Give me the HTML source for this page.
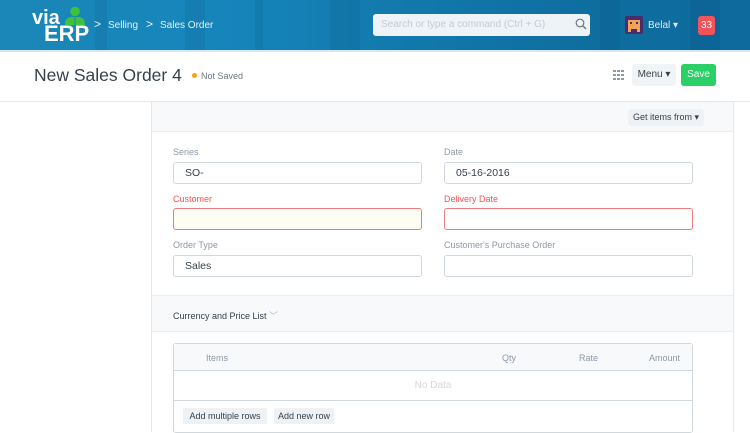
<!DOCTYPE html>
<html><head><meta charset="utf-8"><style>
*{box-sizing:border-box;margin:0;padding:0}
body{width:750px;height:422px;overflow:hidden;font-family:"Liberation Sans",sans-serif;background:#fff;position:relative}
.hdr{position:absolute;left:0;top:0;width:750px;height:52px;background:linear-gradient(90deg,#1b87b8 0%,#1685ba 30%,#1278ab 55%,#0f6d9f 80%,#0e6a9c 100%);border-bottom:2px solid #d8e8f0}
.hdr .stripe{position:absolute;top:0;height:50px;background:rgba(0,40,80,.08)}
.abs{position:absolute}
.logo1{left:32px;top:9px;color:#fff;font-weight:bold;font-size:20px;line-height:18px}
.logo2{left:44px;top:24px;color:#fff;font-weight:bold;font-size:22px;line-height:20px}
.bc{color:#e6f2f8;font-size:10px;top:20px}
.search{left:373px;top:14px;width:217px;height:22px;background:#eef3f7;border-radius:3px;font-size:10px;color:#c2ccd4;padding:5px 8px}
.badge{left:698px;top:16px;width:17px;height:19px;background:#f0545a;border-radius:3px;color:#fff;font-size:10px;text-align:center;line-height:19px}
.title{left:34px;top:65px;font-size:17.5px;color:#36414c}
.ns{left:201px;top:71px;font-size:9px;color:#6c7680}
.dot{left:192px;top:73px;width:5px;height:5px;border-radius:3px;background:#ffa00a}
.menu{left:632px;top:64px;width:44px;height:22px;background:#f0f4f7;border-radius:3px;font-size:10px;color:#36414c;text-align:center;line-height:22px}
.save{left:681px;top:64px;width:35px;height:22px;background:#28d065;border-radius:3px;font-size:10px;color:#fff;text-align:center;line-height:22px}
.pline{left:0;top:101px;width:750px;height:1px;background:#e4e8ec}
.panel{left:151px;top:102px;width:583px;height:330px;border-left:1px solid #e4e8ec;border-right:1px solid #e4e8ec}
.strip{left:152px;top:102px;width:581px;height:30px;background:#f7f9fb;border-bottom:1px solid #ebeff2}
.gif{left:628px;top:109px;width:76px;height:17px;background:#eef2f5;border-radius:3px;font-size:9px;color:#36414c;text-align:center;line-height:17px}
.lbl{font-size:9px;color:#8d99a6}
.red{color:#f0545a}
.inp{width:249px;height:22px;border:1px solid #d1d8dd;border-radius:3px;font-size:10.5px;color:#36414c;padding:4px 11px;background:#fff}
.inp.err{border-color:#f07a7e}
.sec{left:152px;top:295px;width:581px;height:37px;background:#f7f9fb;border-top:1px solid #ebeff2;border-bottom:1px solid #ebeff2}
.tbl{left:173px;top:343px;width:520px;height:90px;border:1px solid #d1d8dd;border-radius:3px}
.th{left:174px;top:344px;width:518px;height:27px;background:#f7f9fb;border-bottom:1px solid #d1d8dd}
.thc{font-size:9px;color:#8d99a6;top:353px}
.btn{top:408px;height:16px;background:#eef2f5;border-radius:2px;font-size:9px;color:#36414c;line-height:16px;text-align:center}
</style></head><body>
<div class="hdr">
<div class="stripe" style="left:95px;width:12px"></div>
<div class="stripe" style="left:185px;width:20px"></div>
<div class="stripe" style="left:255px;width:8px"></div>
<div class="stripe" style="left:330px;width:30px"></div>
<div class="stripe" style="left:600px;width:20px"></div>
<div class="stripe" style="left:690px;width:30px"></div>
</div>
<div class="abs logo1">via</div>
<div class="abs logo2">ERP</div>
<svg class="abs" style="left:64px;top:6px" width="22" height="19"><circle cx="11" cy="5.5" r="4.8" fill="#3ec23e"/><path d="M1 19 Q1 11 8 11 L14 11 Q21 11 21 19Z" fill="#3ec23e"/><path d="M11 11 L11 19" stroke="#1685ba" stroke-width="1"/></svg>
<div class="abs bc" style="left:94px;font-size:12px;top:17px">&gt;</div>
<div class="abs bc" style="left:108px">Selling</div>
<div class="abs bc" style="left:146px;font-size:12px;top:17px">&gt;</div>
<div class="abs bc" style="left:160px">Sales Order</div>
<div class="abs search">Search or type a command (Ctrl + G)</div>
<svg class="abs" style="left:575px;top:18px" width="12" height="12"><circle cx="5" cy="5" r="3.8" stroke="#6c7680" stroke-width="1.2" fill="none"/><path d="M8 8 L11 11" stroke="#6c7680" stroke-width="1.4"/></svg>
<svg class="abs" style="left:625px;top:16px" width="18" height="18"><rect width="18" height="18" rx="2" fill="#4a2c6a"/><rect x="3" y="4" width="12" height="9" fill="#f2a35a"/><rect x="5" y="6" width="2" height="2" fill="#4a2c6a"/><rect x="11" y="6" width="2" height="2" fill="#4a2c6a"/><rect x="3" y="13" width="3" height="3" fill="#f2a35a"/><rect x="12" y="13" width="3" height="3" fill="#f2a35a"/></svg>
<div class="abs bc" style="left:648px;top:20px;color:#dcecf5">Belal ▾</div>
<div class="abs badge">33</div>

<div class="abs title">New Sales Order 4</div>
<div class="abs dot"></div>
<div class="abs ns">Not Saved</div>
<svg class="abs" style="left:613px;top:70px" width="11" height="10" fill="#8d99a6"><rect x="0" y="0" width="3" height="2"/><rect x="4" y="0" width="3" height="2"/><rect x="8" y="0" width="3" height="2"/><rect x="0" y="4" width="3" height="2"/><rect x="4" y="4" width="3" height="2"/><rect x="8" y="4" width="3" height="2"/><rect x="0" y="8" width="3" height="2"/><rect x="4" y="8" width="3" height="2"/><rect x="8" y="8" width="3" height="2"/></svg>
<div class="abs menu">Menu ▾</div>
<div class="abs save">Save</div>
<div class="abs pline"></div>
<div class="abs panel"></div>
<div class="abs strip"></div>
<div class="abs gif">Get items from ▾</div>

<div class="abs lbl" style="left:173px;top:147px">Series</div>
<div class="abs inp" style="left:173px;top:162px">SO-</div>
<div class="abs lbl" style="left:444px;top:147px">Date</div>
<div class="abs inp" style="left:444px;top:162px">05-16-2016</div>
<div class="abs lbl red" style="left:173px;top:194px">Customer</div>
<div class="abs inp err" style="left:173px;top:208px;background:#fffdf4"></div>
<div class="abs lbl red" style="left:444px;top:194px">Delivery Date</div>
<div class="abs inp err" style="left:444px;top:208px"></div>
<div class="abs lbl" style="left:173px;top:240px">Order Type</div>
<div class="abs inp" style="left:173px;top:255px">Sales</div>
<div class="abs lbl" style="left:444px;top:240px">Customer's Purchase Order</div>
<div class="abs inp" style="left:444px;top:255px"></div>

<div class="abs sec"></div>
<div class="abs" style="left:173px;top:309px;font-size:9px;color:#36414c">Currency and Price List <span style="color:#b8c2cc">﹀</span></div>
<div class="abs tbl"></div>
<div class="abs th"></div>
<div class="abs thc" style="left:206px">Items</div>
<div class="abs thc" style="left:502px">Qty</div>
<div class="abs thc" style="left:579px">Rate</div>
<div class="abs thc" style="left:649px">Amount</div>
<div class="abs" style="left:174px;top:380px;width:518px;text-align:center;font-size:10px;color:#d1d8dd">No Data</div>
<div class="abs" style="left:174px;top:400px;width:518px;height:1px;background:#d1d8dd"></div>
<div class="abs btn" style="left:183px;width:84px">Add multiple rows</div>
<div class="abs btn" style="left:274px;width:60px">Add new row</div>
</body></html>
